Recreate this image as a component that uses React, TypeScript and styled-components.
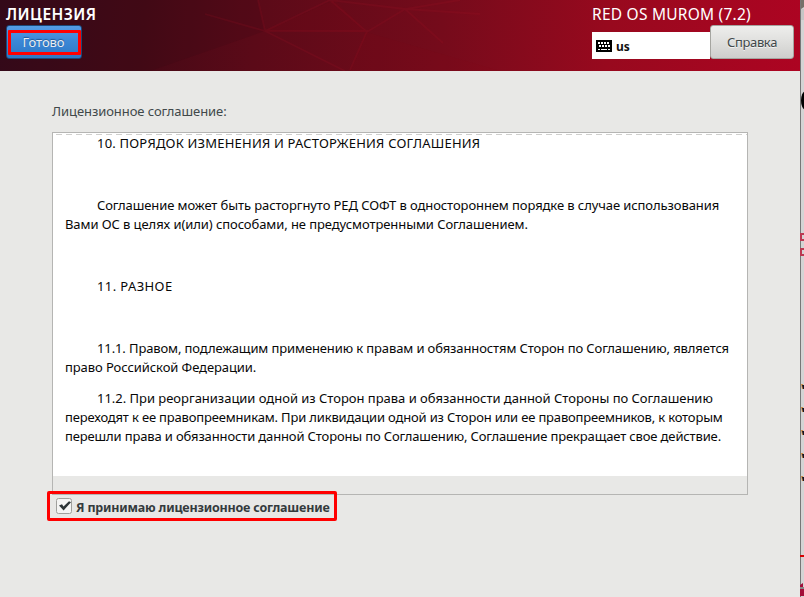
import React from 'react';
import styled, { createGlobalStyle } from 'styled-components';

const Global = createGlobalStyle`
  * { box-sizing: border-box; }
  html, body { margin: 0; padding: 0; }
  body { width: 804px; height: 597px; overflow: hidden; font-family: "Noto Sans", sans-serif; }
`;

const Screen = styled.div`
  display: flex;
  width: 804px;
  height: 597px;
  overflow: hidden;
  background: #d4d4d4;
`;
const Installer = styled.main`
  width: 800px;
  height: 597px;
  background: #e8e8e6;
`;
const Header = styled.header`
  position: relative;
  display: flex;
  justify-content: space-between;
  height: 71px;
  padding: 5px 6px 0;
  background: linear-gradient(95deg, #36091a 0%, #460916 18%, #5b0a18 32%, #750b1b 55%, #98091e 76%, #ad0422 100%);
`;
const Facets = styled.svg`
  position: absolute;
  inset: 0;
`;
const HeaderLeft = styled.div`
  position: relative;
  display: flex;
  flex-direction: column;
  align-items: flex-start;
`;
const HeaderRight = styled.div`
  position: relative;
  width: 202px;
`;
const Caption = styled.div<{ $bold?: boolean; $spacing: number }>`
  height: 20px;
  font-size: 15.5px;
  line-height: 19px;
  font-weight: ${(p) => (p.$bold ? 600 : 400)};
  letter-spacing: ${(p) => p.$spacing}px;
  color: #fff;
  white-space: nowrap;
`;
const DoneButton = styled.button`
  width: 76px;
  height: 34px;
  padding: 4px 0 3px 1px;
  border: 1px solid #1b4778;
  border-radius: 3px;
  background: linear-gradient(#559be4, #3c88d7 45%, #2c77c5);
  color: #e8edf2;
  font: 13px/19px "Noto Sans", sans-serif;
  letter-spacing: -0.1px;
`;
const DoneMark = styled.span`
  display: block;
  height: 25px;
  border: 3px solid #f00;
  border-radius: 1px;
  line-height: 19px;
  padding-right: 2px;
  text-shadow: 0 -1px 1px #205590;
`;
const Tools = styled.div`
  display: flex;
  align-items: flex-end;
  height: 34px;
`;
const Layout = styled.div`
  display: flex;
  align-items: center;
  gap: 4px;
  width: 118px;
  height: 27px;
  padding: 0 4px;
  background: #fff;
  color: #111;
  font-size: 12px;
  font-weight: 700;
`;
const LayoutName = styled.span`
  padding-top: 2px;
`;
const HelpButton = styled.button`
  width: 84px;
  height: 34px;
  padding: 0;
  border: 1px solid #a5a5a0;
  border-radius: 3px;
  background: linear-gradient(#eeeeec, #dfdfdd 50%, #cececc);
  color: #41484a;
  font: 13px/20px "Noto Sans", sans-serif;
  letter-spacing: -0.35px;
  text-shadow: 0 1px #f3f3f3;
`;
const Content = styled.section`
  padding: 31px 52px 0;
`;
const Label = styled.div`
  height: 30px;
  font-size: 13px;
  line-height: 19px;
  letter-spacing: -0.07px;
  color: #41484a;
`;
const Frame = styled.div`
  width: 696px;
  height: 363px;
  border: 1px solid #b5b5b3;
  background: #e8e8e6;
`;
const License = styled.article`
  height: 343px;
  padding: 1px 12px 0;
  background: repeating-linear-gradient(90deg, transparent 0 3px, #cfcfcd 3px 9px, transparent 9px 10px) 0 1px / 100% 1px no-repeat #fff;
  font-size: 13px;
  line-height: 19px;
  color: #080808;
`;
const Paragraph = styled.p<{ $gap?: boolean }>`
  margin: 0 0 ${(p) => (p.$gap ? 43 : 12)}px;
  text-indent: 32px;
`;
const Line = styled.span<{ $spacing: number }>`
  display: block;
  height: 19px;
  letter-spacing: ${(p) => p.$spacing}px;
  white-space: nowrap;
  & + & { text-indent: 0; }
`;
const Accept = styled.label`
  display: flex;
  align-items: center;
  gap: 3px;
  position: relative;
  width: 290px;
  height: 30px;
  margin: -4px 0 0 -5px;
  padding: 0 0 0 6px;
  border: 3px solid #f00;
  border-radius: 2px;
  font-size: 12.5px;
  font-weight: 700;
  letter-spacing: -0.19px;
  color: #343b3d;
  white-space: nowrap;
`;
const AcceptText = styled.span`
  padding-top: 2px;
`;
const CheckBox = styled.svg`
  flex: none;
`;
const Backdrop = styled.aside`
  width: 4px;
  height: 597px;
`;

const paragraphs: { gap?: boolean; lines: [string, number][] }[] = [
  { gap: true, lines: [['10. ПОРЯДОК ИЗМЕНЕНИЯ И РАСТОРЖЕНИЯ СОГЛАШЕНИЯ', 0.2]] },
  {
    gap: true,
    lines: [
      ['Соглашение может быть расторгнуто РЕД СОФТ в одностороннем порядке в случае использования', -0.09],
      ['Вами ОС в целях и(или) способами, не предусмотренными Соглашением.', -0.08],
    ],
  },
  { gap: true, lines: [['11. РАЗНОЕ', 0.4]] },
  {
    lines: [
      ['11.1. Правом, подлежащим применению к правам и обязанностям Сторон по Соглашению, является', -0.115],
      ['право Российской Федерации.', -0.08],
    ],
  },
  {
    lines: [
      ['11.2. При реорганизации одной из Сторон права и обязанности данной Стороны по Соглашению', -0.02],
      ['переходят к ее правопреемникам. При ликвидации одной из Сторон или ее правопреемников, к которым', -0.17],
      ['перешли права и обязанности данной Стороны по Соглашению, Соглашение прекращает свое действие.', -0.14],
    ],
  },
];

const arrowRows = [384, 407, 430, 453, 476];

const KeyboardIcon = () => (
  <svg width="16" height="12" viewBox="0 0 16 12" shapeRendering="crispEdges">
    <rect width="16" height="12" rx="1" fill="#000" />
    <path d="M2 3h12M3 6h11" stroke="#fff" strokeWidth="2" strokeDasharray="2 1" />
    <path d="M2 9.5h2M5 9.5h6M12 9.5h2" stroke="#fff" />
  </svg>
);

const CheckIcon = () => (
  <CheckBox width="17" height="17" viewBox="0 0 17 17">
    <rect x=".5" y=".5" width="15" height="15" rx="2" fill="#f4f4f3" stroke="#a0a09d" />
    <path d="M3 7.5 6 6.2 7.5 8.6 13 3.2 15 4.2 7.6 12.4Z" fill="#2c3436" />
  </CheckBox>
);

export default function App() {
  return (
    <Screen>
      <Global />
      <Installer>
        <Header>
          <Facets width="800" height="71" viewBox="0 0 800 71">
            <path d="M0 0H258L265 31 150 71H0Z" fill="#200812" opacity=".1" />
            <path d="M265 31 366 32 335 0ZM366 32 500 71H350Z" fill="#8d0715" opacity=".1" />
            <path d="M205 14 265 31 330 0 367 32 405 9 460 0M258 0l7 31h102l-17 39M265 31l80 40M330 0l75 9 75 5M405 9l38 34" fill="none" stroke="#b11228" strokeWidth="1.8" opacity=".15" />
          </Facets>
          <HeaderLeft>
            <Caption $bold $spacing={0.45}>ЛИЦЕНЗИЯ</Caption>
            <DoneButton><DoneMark>Готово</DoneMark></DoneButton>
          </HeaderLeft>
          <HeaderRight>
            <Caption $spacing={0.24}>RED OS MUROM (7.2)</Caption>
            <Tools>
              <Layout><KeyboardIcon /><LayoutName>us</LayoutName></Layout>
              <HelpButton>Справка</HelpButton>
            </Tools>
          </HeaderRight>
        </Header>
        <Content>
          <Label>Лицензионное соглашение:</Label>
          <Frame>
            <License>
              {paragraphs.map((p, i) => (
                <Paragraph key={i} $gap={p.gap}>
                  {p.lines.map(([text, spacing]) => <Line key={text} $spacing={spacing}>{text}</Line>)}
                </Paragraph>
              ))}
            </License>
          </Frame>
          <Accept><CheckIcon /><AcceptText>Я принимаю лицензионное соглашение</AcceptText></Accept>
        </Content>
      </Installer>
      <Backdrop>
        <svg width="4" height="597" viewBox="0 0 4 597">
          <path d="M0 0h4v7l-3 2H0Z" fill="#77716a" />
          <path d="M1 9h3v11H1Z" fill="#c5c5c5" />
          <path d="M.5 0V597" stroke="#777" />
          <ellipse cx="5" cy="100.5" rx="4" ry="9" fill="#000" />
          <path d="M0 233h4v2H2v4h2v2H0ZM0 248h4v2H2v4h2v2H0Z" fill="#bd3952" />
          {arrowRows.map((y) => (
            <g key={y}>
              <path d={`M1 ${y}h2l1 5H2Z`} fill="#cf8a43" />
              <path d={`M2 ${y + 1}h2v4H3Z`} fill="#151525" />
            </g>
          ))}
          <path d="M0 555h4v2H0Z" fill="#d80000" />
          <path d="M0 585l3-2v5h1v8H0Z" fill="#a30e38" />
          <path d="M0 587h4v2H0Z" fill="#888" />
        </svg>
      </Backdrop>
    </Screen>
  );
}
